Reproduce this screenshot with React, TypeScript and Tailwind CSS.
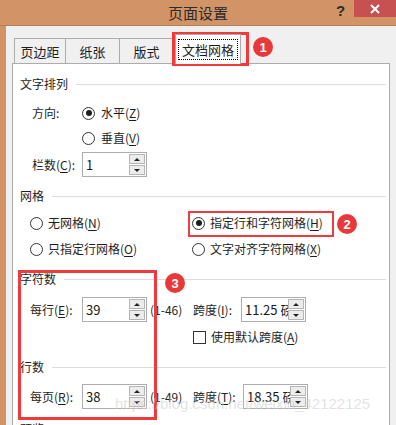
import type { ReactNode } from 'react';

function Radio({ checked }: { checked?: boolean }) {
  return (
    <span className="flex h-[13px] w-[13px] shrink-0 items-center justify-center rounded-full border border-[#333333] bg-white">
      {checked && <span className="h-[6px] w-[6px] rounded-full bg-[#1e1e1e]" />}
    </span>
  );
}

function Key({ children }: { children: ReactNode }) {
  return <span className="underline underline-offset-2">{children}</span>;
}

function SectionHeader({ title, lineGap = 'ml-[8px]' }: { title: string; lineGap?: string }) {
  return (
    <div className="flex h-[16px] items-center">
      <span>{title}</span>
      <div className={`h-px flex-1 bg-[#dcdcdc] ${lineGap}`} />
    </div>
  );
}

function Spin({ value }: { value: string }) {
  return (
    <div className="flex h-[25px] w-[65px] shrink-0 border border-[#abadb3] bg-white">
      <span className="flex-1 overflow-hidden whitespace-nowrap pl-[3px] leading-[23px] text-[13px] text-[#1a1a1a]">
        {value}
      </span>
      <div className="flex w-[17px] flex-col gap-px py-px pr-px">
        <div className="flex flex-1 items-center justify-center border border-[#b5b5b5] bg-[#ececec]">
          <span className="h-0 w-0 border-x-[3px] border-b-[3px] border-x-transparent border-b-[#222]" />
        </div>
        <div className="flex flex-1 items-center justify-center border border-[#b5b5b5] bg-[#ececec]">
          <span className="h-0 w-0 border-x-[3px] border-t-[3px] border-x-transparent border-t-[#222]" />
        </div>
      </div>
    </div>
  );
}

function Badge({ n, className }: { n: string; className: string }) {
  return (
    <span
      className={`absolute flex h-[20px] w-[20px] items-center justify-center rounded-full bg-[#e8383a] font-['Liberation_Sans',sans-serif] text-[13px] font-bold text-white ${className}`}
    >
      {n}
    </span>
  );
}

export default function App() {
  return (
    <div className="relative h-[425px] w-[396px] overflow-hidden whitespace-nowrap bg-[#d29466] font-['Noto_Sans_CJK_SC','Noto_Sans',sans-serif] text-[12px] leading-none text-[#1e1e1e]">
      {/* title bar */}
      <div className="relative flex h-[26px] items-center justify-center border-b border-[#b98058]">
        <span className="text-[15px] text-[#2b2b2b]">页面设置</span>
        <span className="absolute left-[336px] top-[3px] font-['Liberation_Sans',sans-serif] text-[15px] font-bold text-[#2b2b2b]">?</span>
        <div className="absolute right-0 top-0 flex h-[17px] w-[42px] items-center justify-center bg-[#c75050]">
          <svg width="10" height="10" viewBox="0 0 10 10" aria-hidden="true">
            <path d="M1 1 L9 9 M9 1 L1 9" stroke="white" strokeWidth="2" />
          </svg>
        </div>
      </div>

      {/* dialog body */}
      <div className="ml-[6px] h-[399px] bg-[#f0f0f0] pl-[6px] pt-[8px]">
        <div className="flex h-[29px] items-end pl-[2px]">
          <div className="flex h-[25px] w-[52px] items-center justify-center border border-b-0 border-[#acacac] bg-[#f0f0f0] text-[13px]">页边距</div>
          <div className="flex h-[25px] w-[54px] items-center justify-center border border-b-0 border-l-0 border-[#acacac] bg-[#f0f0f0] text-[13px]">纸张</div>
          <div className="flex h-[25px] w-[54px] items-center justify-center border border-b-0 border-l-0 border-[#acacac] bg-[#f0f0f0] text-[13px]">版式</div>
          <div className="relative z-10 -mb-px ml-px flex h-[30px] w-[66px] items-center justify-center border border-b-0 border-[#acacac] bg-white">
            <span className="border border-dotted border-black px-[3px] py-[3px] text-[13px]">文档网格</span>
          </div>
        </div>

        <div className="h-[400px] w-[378px] border border-[#acacac] bg-white pl-[7px] pr-[3px] pt-[12px]">
          <SectionHeader title="文字排列" />

          <div className="mt-[11px] flex h-[20px] items-center pl-[12px]">
            <span className="w-[50px]">方向:</span>
            <Radio checked />
            <span className="ml-[6px]">
              水平(<Key>Z</Key>)
            </span>
          </div>
          <div className="mt-[5px] flex h-[20px] items-center pl-[62px]">
            <Radio />
            <span className="ml-[6px]">
              垂直(<Key>V</Key>)
            </span>
          </div>
          <div className="mt-[4px] flex items-center pl-[12px]">
            <span className="w-[50px]">
              栏数(<Key>C</Key>):
            </span>
            <Spin value="1" />
          </div>

          <div className="mt-[11px]">
            <SectionHeader title="网格" />
          </div>
          <div className="mt-[9px] flex h-[20px] items-center pl-[10px]">
            <div className="flex w-[162px] items-center">
              <Radio />
              <span className="ml-[5px]">
                无网格(<Key>N</Key>)
              </span>
            </div>
            <Radio checked />
            <span className="ml-[5px]">
              指定行和字符网格(<Key>H</Key>)
            </span>
          </div>
          <div className="mt-[6px] flex h-[20px] items-center pl-[10px]">
            <div className="flex w-[162px] items-center">
              <Radio />
              <span className="ml-[5px]">
                只指定行网格(<Key>O</Key>)
              </span>
            </div>
            <Radio />
            <span className="ml-[5px]">
              文字对齐字符网格(<Key>X</Key>)
            </span>
          </div>

          <div className="mt-[12px]">
            <SectionHeader title="字符数" />
          </div>
          <div className="mt-[10px] flex items-center pl-[10px]">
            <span className="w-[52px]">
              每行(<Key>E</Key>):
            </span>
            <Spin value="39" />
            <span className="ml-[3px] w-[43px] shrink-0">(1-46)</span>
            <span className="w-[48px] shrink-0">
              跨度(<Key>I</Key>):
            </span>
            <Spin value="11.25 磅" />
          </div>
          <div className="mt-[6px] flex h-[18px] items-center pl-[173px]">
            <span className="h-[13px] w-[13px] border border-[#333333] bg-white" />
            <span className="ml-[5px]">
              使用默认跨度(<Key>A</Key>)
            </span>
          </div>

          <div className="mt-[13px]">
            <SectionHeader title="行数" />
          </div>
          <div className="mt-[9px] flex items-center pl-[10px]">
            <span className="w-[52px]">
              每页(<Key>R</Key>):
            </span>
            <Spin value="38" />
            <span className="ml-[3px] w-[43px] shrink-0">(1-49)</span>
            <span className="w-[50px] shrink-0">
              跨度(<Key>T</Key>):
            </span>
            <Spin value="18.35 磅" />
          </div>

          <div className="mt-[12px]">
            <SectionHeader title="预览" />
          </div>
        </div>
      </div>

      {/* annotations */}
      <div className="absolute left-[172px] top-[32px] h-[34px] w-[77px] border-[3px] border-[#ef3b3b]" />
      <Badge n="1" className="left-[253px] top-[37px]" />
      <div className="absolute left-[188px] top-[211px] h-[26px] w-[146px] border-[2px] border-[#ef3b3b]" />
      <Badge n="2" className="left-[337px] top-[214px]" />
      <div className="absolute left-[18px] top-[270px] h-[150px] w-[139px] border-[3px] border-[#ef3b3b]" />
      <Badge n="3" className="left-[165px] top-[273px]" />

      <span className="pointer-events-none absolute left-[115px] top-[396px] font-['Liberation_Sans',sans-serif] text-[15px] text-[#d0d0d0]/60">
        https://blog.csdn.net/weixin_42122125
      </span>
    </div>
  );
}
